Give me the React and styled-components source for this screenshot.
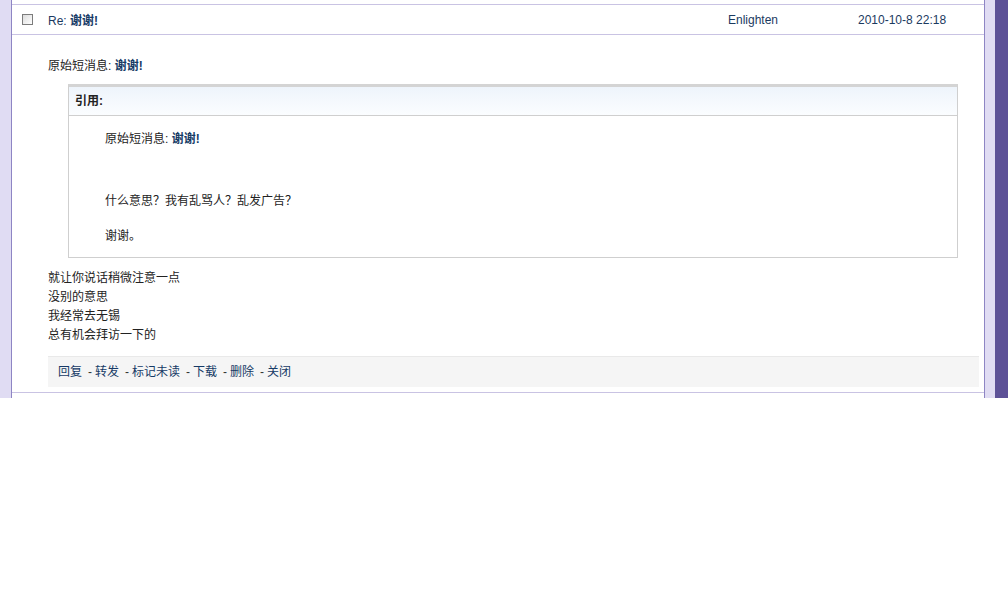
import React from "react";
import styled, { createGlobalStyle } from "styled-components";

const GlobalStyle = createGlobalStyle`
  html, body {
    margin: 0;
    padding: 0;
    background: #fff;
  }
  body {
    font-family: "Liberation Sans", "Noto Sans CJK SC", Arial, sans-serif;
    font-size: 12px;
    color: #333;
  }
`;

const Page = styled.div`
  display: flex;
  height: 398px;
`;

const SideStrip = styled.div`
  width: 11px;
  background: #e0dcf3;
  border-right: 1px solid #8e85c4;
`;

const RightEdge = styled.div`
  display: flex;
  border-left: 1px solid #8e85c4;

  span:first-child {
    width: 10px;
    background: #e0dcf3;
  }
  span:last-child {
    width: 13px;
    background: #5d5197;
  }
`;

const Main = styled.div`
  flex: 1;
  padding-top: 4px;
  background: #fff;
`;

const Row = styled.div`
  display: flex;
  align-items: center;
  height: 29px;
  border-top: 1px solid #c9c3e3;
  border-bottom: 1px solid #c9c3e3;
`;

const Check = styled.span`
  box-sizing: border-box;
  width: 11px;
  height: 11px;
  margin: 0 15px 0 10px;
  border: 1px solid #7c7c7c;
  background: linear-gradient(135deg, #dcdcdc, #fff);
`;

const Cell = styled.div`
  width: ${(p) => p.w}px;
  color: #1b3a5f;
`;

const Link = styled.a`
  color: #163a66;
  font-weight: ${(p) => (p.bold ? "bold" : "normal")};
  text-decoration: none;
  cursor: pointer;
`;

const Body = styled.div`
  padding: 22px 5px 0 36px;
  line-height: 19px;
`;

const Line = styled.div`
  color: #222;
`;

const Quote = styled.div`
  margin: 8px 21px 11px 20px;
  border: 1px solid #cfcfcf;
  border-top: 3px solid #d4d4d4;
`;

const QuoteHead = styled.div`
  height: 28px;
  line-height: 29px;
  padding-left: 6px;
  font-weight: bold;
  color: #222;
  background: linear-gradient(#eef4fb, #fbfdff);
  border-bottom: 1px solid #cfcfcf;
`;

const QuoteBody = styled.div`
  padding: 14px 0 11px 36px;
`;

const Para = styled.div`
  color: #222;
  margin-top: ${(p) => p.gap || 0}px;
`;

const Actions = styled.div`
  margin-top: 11px;
  height: 30px;
  line-height: 31px;
  padding-left: 10px;
  background: #f5f5f5;
  border-top: 1px solid #e9e9e9;
  color: #333;

  ${Link} + ${Link}::before {
    content: "-";
    color: #333;
    margin: 0 3px 0 6px;
  }
`;

const Footer = styled.div`
  margin-top: 5px;
  border-top: 1px solid #c9c3e3;
`;

const actions = ["回复", "转发", "标记未读", "下载", "删除", "关闭"];

export default function App() {
  return (
    <>
      <GlobalStyle />
      <Page>
        <SideStrip />
        <Main>
          <Row>
            <Check />
            <Cell w={680}>
              Re: <Link bold>谢谢!</Link>
            </Cell>
            <Cell w={130}>Enlighten</Cell>
            <Cell w={120}>2010-10-8 22:18</Cell>
          </Row>
          <Body>
            <Line>
              原始短消息: <Link bold>谢谢!</Link>
            </Line>
            <Quote>
              <QuoteHead>引用:</QuoteHead>
              <QuoteBody>
                <Para>
                  原始短消息: <Link bold>谢谢!</Link>
                </Para>
                <Para gap={43}>什么意思？我有乱骂人？乱发广告？</Para>
                <Para gap={16}>谢谢。</Para>
              </QuoteBody>
            </Quote>
            <Line>就让你说话稍微注意一点</Line>
            <Line>没别的意思</Line>
            <Line>我经常去无锡</Line>
            <Line>总有机会拜访一下的</Line>
            <Actions>
              {actions.map((a) => (
                <Link key={a}>{a}</Link>
              ))}
            </Actions>
          </Body>
          <Footer />
        </Main>
        <RightEdge>
          <span />
          <span />
        </RightEdge>
      </Page>
    </>
  );
}
